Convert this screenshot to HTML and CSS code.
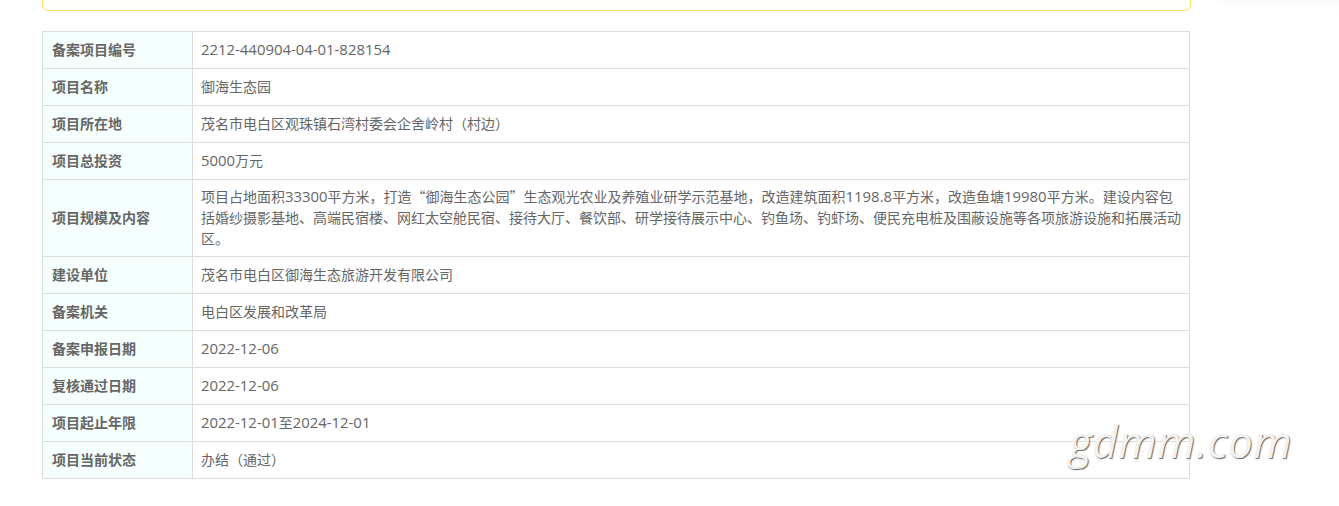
FILE: index.html
```html
<!DOCTYPE html>
<html lang="zh-CN">
<head>
<meta charset="utf-8">
<title>项目备案</title>
<link rel="stylesheet" href="styles.css">
</head>
<body>
<div class="page">
  <div class="notice"></div>
  <table class="info">
    <colgroup><col class="col-label"><col></colgroup>
    <tbody>
      <tr><th>备案项目编号</th><td><span class="num">2212-440904-04-01-828154</span></td></tr>
      <tr><th>项目名称</th><td>御海生态园</td></tr>
      <tr><th>项目所在地</th><td>茂名市电白区观珠镇石湾村委会企舍岭村（村边）</td></tr>
      <tr><th>项目总投资</th><td><span class="num">5000</span>万元</td></tr>
      <tr><th>项目规模及内容</th><td>项目占地面积<span class="num">33300</span>平方米，打造“御海生态公园”生态观光农业及养殖业研学示范基地，改造建筑面积<span class="num">1198.8</span>平方米，改造鱼塘<span class="num">19980</span>平方米。建设内容包括婚纱摄影基地、高端民宿楼、网红太空舱民宿、接待大厅、餐饮部、研学接待展示中心、钓鱼场、钓虾场、便民充电桩及围蔽设施等各项旅游设施和拓展活动区。</td></tr>
      <tr><th>建设单位</th><td>茂名市电白区御海生态旅游开发有限公司</td></tr>
      <tr><th>备案机关</th><td>电白区发展和改革局</td></tr>
      <tr><th>备案申报日期</th><td><span class="num">2022-12-06</span></td></tr>
      <tr><th>复核通过日期</th><td><span class="num">2022-12-06</span></td></tr>
      <tr><th>项目起止年限</th><td><span class="num">2022-12-01</span>至<span class="num">2024-12-01</span></td></tr>
      <tr><th>项目当前状态</th><td>办结（通过）</td></tr>
    </tbody>
  </table>
</div>
<div class="side-shade"></div>
<div class="watermark">gdmm.com</div>
</body>
</html>
```
FILE: styles.css
```css
html, body {
  margin: 0;
  padding: 0;
  background: #fff;
  height: 506px;
  overflow: hidden;
}
body {
  position: relative;
  font-family: "Noto Sans CJK SC", sans-serif;
  font-size: 14px;
  color: #666;
}
.page {
  width: 1149px;
  margin-left: 42px;
}
.notice {
  height: 21px;
  margin-top: -10px;
  margin-bottom: 20px;
  border: 1px solid #ffdf5d;
  border-radius: 6px;
  background: #fffffb;
  box-sizing: border-box;
}
.info {
  width: 1148px;
  border-collapse: collapse;
  table-layout: fixed;
}
.col-label {
  width: 150px;
}
.info th,
.info td {
  border: 1px solid #ddd;
  padding: 6px 8px 7px;
  height: 23px;
  line-height: 21px;
  font-size: 14px;
  font-weight: 400;
  text-align: left;
  vertical-align: middle;
  word-break: break-all;
}
.info th {
  background: #f5fffe;
  font-weight: 700;
  padding-left: 9px;
}
.num {
  font-family: "Open Sans", sans-serif;
  font-size: 14.9px;
  line-height: 1;
}
.side-shade {
  position: absolute;
  left: 1217px;
  top: 0;
  width: 122px;
  height: 12px;
  background: linear-gradient(#fafbfd, #fff);
}
.watermark {
  position: absolute;
  left: 1069px;
  top: 412px;
  font-family: "Open Sans", sans-serif;
  font-style: italic;
  font-weight: 400;
  font-size: 44px;
  line-height: 58px;
  letter-spacing: 0.5px;
  color: #f2f2f2;
  text-shadow: 1px 1px 1px #666;
}
```
